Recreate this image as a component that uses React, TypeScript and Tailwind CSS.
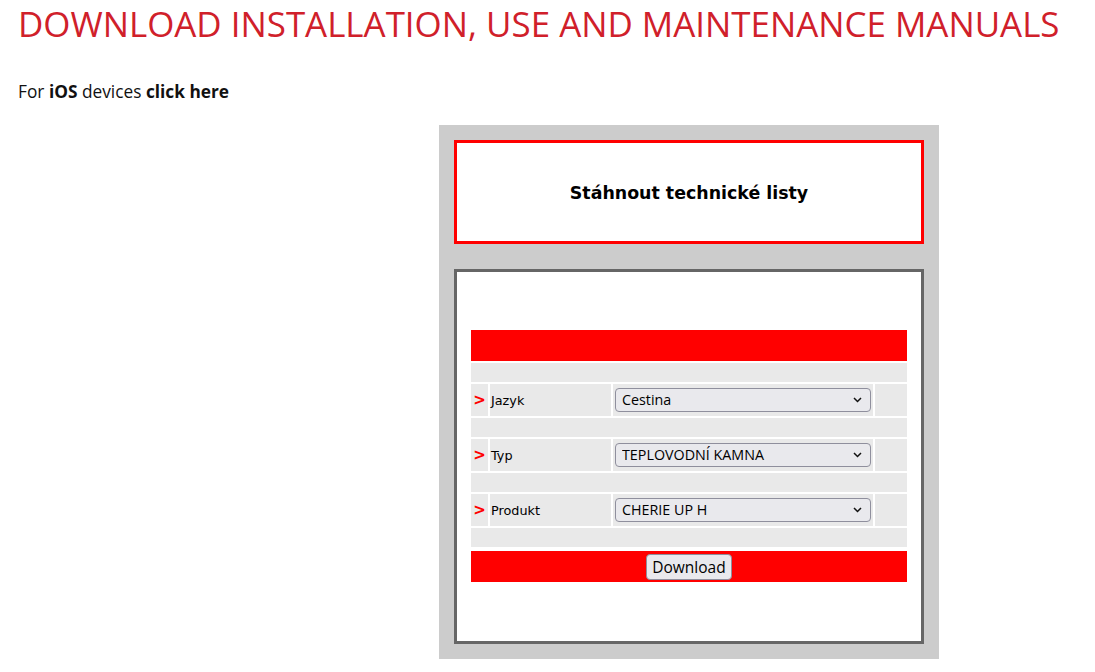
import { useState } from 'react';

const FIELDS = [
  { key: 'lang', label: 'Jazyk', options: ['Cestina', 'English', 'Deutsch', 'Italiano'] },
  { key: 'type', label: 'Typ', options: ['TEPLOVODNÍ KAMNA', 'KAMNA NA PELETY'] },
  { key: 'product', label: 'Produkt', options: ['CHERIE UP H', 'CHERIE UP'] },
];

function Spacer() {
  return <div className="h-[19px] bg-[#e9e9e9]" />;
}

export default function App() {
  const [values, setValues] = useState<Record<string, string>>({
    lang: 'Cestina',
    type: 'TEPLOVODNÍ KAMNA',
    product: 'CHERIE UP H',
  });

  return (
    <div className="min-h-[672px] bg-white px-[18px] pt-[2px] font-['Open_Sans',sans-serif] text-[#111]">
      <h1 className="text-[34.9px] leading-[44px] font-normal text-[#d0202a]">
        DOWNLOAD INSTALLATION, USE AND MAINTENANCE MANUALS
      </h1>

      <p className="mt-[34px] text-[17.3px] leading-[24px]">
        For <b>iOS</b> devices <b>click here</b>
      </p>

      {/* Modulo download */}
      <div className="ml-[421px] mt-[21px] w-[500px] bg-[#cccccc] p-[15px] font-['DejaVu_Sans',Verdana,sans-serif]">
        <div className="flex h-[104px] items-center justify-center border-[3px] border-[#ff0000] bg-white pt-[3px]">
          <h2 className="text-[17.4px] font-bold text-black">Stáhnout technické listy</h2>
        </div>

        <div className="mt-[25px] border-[3px] border-[#666666] bg-white px-[14px] pt-[58px] pb-[59px]">
          <div className="flex flex-col gap-[2px]">
            <div className="h-[31px] bg-[#ff0000]" />
            <Spacer />
            {FIELDS.map((f) => (
              <div key={f.key} className="flex flex-col gap-[2px]">
                <div className="flex h-[32px] gap-[2px]">
                  <div className="flex w-[17px] items-center justify-center bg-[#e9e9e9] pt-[1px] text-[15px] font-bold text-[#ff0000]">
                    &gt;
                  </div>
                  <div className="flex w-[121px] items-center bg-[#e9e9e9] pl-[1px] pt-[2px] text-[12.8px] text-black">
                    {f.label}
                  </div>
                  <div className="flex w-[260px] items-center bg-[#e9e9e9] px-[2px]">
                    <div className="relative w-full">
                      <select
                        value={values[f.key]}
                        onChange={(e) => setValues((prev) => ({ ...prev, [f.key]: e.target.value }))}
                        className="h-[24px] w-full appearance-none rounded-[4px] border border-[#8f8f9d] bg-[#e9e9ed] pl-[6px] font-['Open_Sans',sans-serif] text-[14.3px] text-black"
                      >
                        {f.options.map((o) => (
                          <option key={o} value={o}>
                            {o}
                          </option>
                        ))}
                      </select>
                      <svg
                        className="pointer-events-none absolute right-[9px] top-[9px]"
                        width="9"
                        height="6"
                        viewBox="0 0 9 6"
                        fill="none"
                      >
                        <path d="M1 1l3.5 3.5L8 1" stroke="#111" strokeWidth="1.5" />
                      </svg>
                    </div>
                  </div>
                  <div className="flex-1 bg-[#e9e9e9]" />
                </div>
                <Spacer />
              </div>
            ))}
          </div>
          <div className="mt-[4px] flex h-[31px] items-center justify-center bg-[#ff0000]">
            <button
              type="button"
              className="h-[26px] rounded-[4px] border border-[#8f8f9d] bg-[#e9e9ed] px-[5px] font-['Open_Sans',sans-serif] text-[15.5px] leading-[22px] text-black"
            >
              Download
            </button>
          </div>
        </div>
      </div>
    </div>
  );
}
